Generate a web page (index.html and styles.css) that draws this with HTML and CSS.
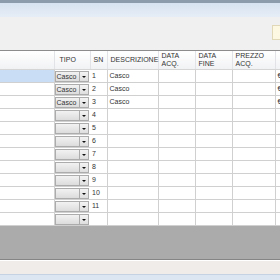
FILE: index.html
```
<!DOCTYPE html>
<html>
<head>
<meta charset="utf-8">
<title>Dotazioni</title>
<link rel="stylesheet" href="styles.css">
</head>
<body>
<div class="window">
    <div class="frame-top"></div>
    <div class="title-band"></div>
    <div class="toolbar">
        <div class="note"></div>
    </div>
    <div class="grid-wrap">
        <table class="grid">
            <colgroup>
                <col class="c-row">
                <col class="c-tipo">
                <col class="c-sn">
                <col class="c-desc">
                <col class="c-data">
                <col class="c-data">
                <col class="c-prezzo">
                <col class="c-rest">
            </colgroup>
            <thead>
                <tr>
                    <th></th>
                    <th class="center">TIPO</th>
                    <th>SN</th>
                    <th>DESCRIZIONE</th>
                    <th>DATA<br>ACQ.</th>
                    <th>DATA<br>FINE</th>
                    <th>PREZZO<br>ACQ.</th>
                    <th></th>
                </tr>
            </thead>
            <tbody>
                <tr><td class="sel"></td><td class="combo-cell"><div class="combo"><span class="val">Casco</span><span class="btn"></span></div></td><td>1</td><td>Casco</td><td></td><td></td><td></td><td>€</td></tr>
                <tr><td></td><td class="combo-cell"><div class="combo"><span class="val">Casco</span><span class="btn"></span></div></td><td>2</td><td>Casco</td><td></td><td></td><td></td><td>€</td></tr>
                <tr><td></td><td class="combo-cell"><div class="combo"><span class="val">Casco</span><span class="btn"></span></div></td><td>3</td><td>Casco</td><td></td><td></td><td></td><td>€</td></tr>
                <tr><td></td><td class="combo-cell"><div class="combo"><span class="val"></span><span class="btn"></span></div></td><td>4</td><td></td><td></td><td></td><td></td><td></td></tr>
                <tr><td></td><td class="combo-cell"><div class="combo"><span class="val"></span><span class="btn"></span></div></td><td>5</td><td></td><td></td><td></td><td></td><td></td></tr>
                <tr><td></td><td class="combo-cell"><div class="combo"><span class="val"></span><span class="btn"></span></div></td><td>6</td><td></td><td></td><td></td><td></td><td></td></tr>
                <tr><td></td><td class="combo-cell"><div class="combo"><span class="val"></span><span class="btn"></span></div></td><td>7</td><td></td><td></td><td></td><td></td><td></td></tr>
                <tr><td></td><td class="combo-cell"><div class="combo"><span class="val"></span><span class="btn"></span></div></td><td>8</td><td></td><td></td><td></td><td></td><td></td></tr>
                <tr><td></td><td class="combo-cell"><div class="combo"><span class="val"></span><span class="btn"></span></div></td><td>9</td><td></td><td></td><td></td><td></td><td></td></tr>
                <tr><td></td><td class="combo-cell"><div class="combo"><span class="val"></span><span class="btn"></span></div></td><td>10</td><td></td><td></td><td></td><td></td><td></td></tr>
                <tr><td></td><td class="combo-cell"><div class="combo"><span class="val"></span><span class="btn"></span></div></td><td>11</td><td></td><td></td><td></td><td></td><td></td></tr>
                <tr><td></td><td class="combo-cell"><div class="combo"><span class="val"></span><span class="btn"></span></div></td><td></td><td></td><td></td><td></td><td></td><td></td></tr>
            </tbody>
        </table>
        <div class="empty-area"></div>
    </div>
    <div class="status"></div>
    <div class="frame-bottom"></div>
</div>
</body>
</html>
```

FILE: styles.css
```
html, body {
    margin: 0;
    padding: 0;
}

body {
    width: 280px;
    height: 280px;
    overflow: hidden;
    background-color: #f0f0f0;
    font-family: "Liberation Sans", Arial, sans-serif;
    font-size: 7px;
    color: #222;
}

.window {
    display: flex;
    flex-direction: column;
    height: 280px;
}

.frame-top {
    height: 3px;
    background-color: #8d9cad;
}

.title-band {
    height: 14px;
    background: linear-gradient(to bottom, #d7e3f1, #e6edf6);
}

.toolbar {
    height: 33px;
    background-color: #f0f0f0;
    display: flex;
    justify-content: flex-end;
    padding-top: 8px;
    box-sizing: border-box;
}

.note {
    width: 8px;
    height: 13px;
    margin-right: -1px;
    border: 1px solid #e1d8b8;
    border-right: none;
    background-color: #fdf8e1;
}

.grid-wrap {
    flex: 1;
    display: flex;
    flex-direction: column;
    border-top: 1px solid #8c8c8c;
    background-color: #ababab;
    overflow: hidden;
}

.grid {
    border-collapse: collapse;
    table-layout: fixed;
    width: 300px;
    background-color: #fff;
}

.c-row { width: 54px; }
.c-tipo { width: 36px; }
.c-sn { width: 17px; }
.c-desc { width: 51px; }
.c-data { width: 37px; }
.c-prezzo { width: 43px; }
.c-rest { width: 62px; }

.grid th {
    height: 18px;
    padding: 0 0 0 3px;
    text-align: left;
    vertical-align: middle;
    font-weight: normal;
    font-size: 7px;
    line-height: 8px;
    color: #333;
    background: linear-gradient(to bottom, #ffffff, #f1f2f4);
    border-right: 1px solid #e2e3e6;
    border-bottom: 1px solid #d5d5d5;
}

.grid th.center {
    padding-left: 5px;
}

.grid td {
    height: 12px;
    padding: 0 0 0 2px;
    line-height: 12px;
    white-space: nowrap;
    overflow: hidden;
    color: #333;
    border-right: 1px solid #d0d0d0;
    border-bottom: 1px solid #d0d0d0;
}

.grid td.sel {
    background-color: #c9def5;
}

.grid td.combo-cell {
    padding: 0;
    border-right: none;
}

.combo {
    display: flex;
    height: 11px;
    margin: 0 1px 0 0;
}

.combo .val {
    flex: 1;
    line-height: 10px;
    padding-left: 1px;
    border: 1px solid #acacac;
    background: linear-gradient(to bottom, #f2f2f2, #dcdcdc);
    color: #333;
    overflow: hidden;
}

.combo .btn {
    position: relative;
    width: 8px;
    border: 1px solid #acacac;
    border-left: none;
    background: linear-gradient(to bottom, #f4f4f4, #dedede);
}

.combo .btn::after {
    content: "";
    position: absolute;
    left: 2px;
    top: 4px;
    border-left: 2px solid transparent;
    border-right: 2px solid transparent;
    border-top: 2px solid #111;
}

.empty-area {
    flex: 1;
    background-color: #ababab;
}

.status {
    height: 14px;
    border-top: 1px solid #858585;
    box-shadow: inset 0 1px 0 #ffffff;
    background-color: #f0ece9;
}

.frame-bottom {
    height: 5px;
    border-top: 1px solid #c4d2e3;
    background-color: #dbe6f2;
}
```
